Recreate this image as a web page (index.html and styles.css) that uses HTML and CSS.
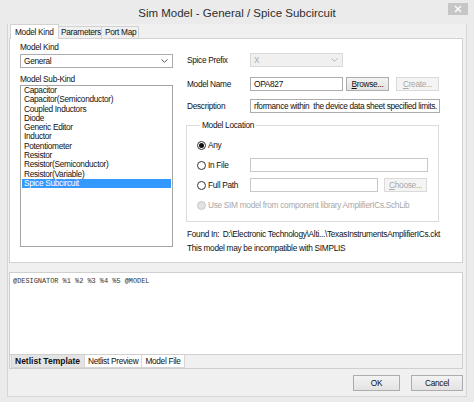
FILE: index.html
```html
<!DOCTYPE html>
<html>
<head>
<meta charset="utf-8">
<link rel="stylesheet" href="styles.css">
</head>
<body>
<div class="window">
  <div class="titlebar">
    <span class="title">Sim Model - General / Spice Subcircuit</span>
    <div class="close"><svg width="8" height="8" viewBox="0 0 8 8"><path d="M1 1L7 7M7 1L1 7" stroke="#fff" stroke-width="1.4"/></svg></div>
  </div>
  <div class="client">
    <div class="tabs">
      <div class="tab active w1">Model Kind</div>
      <div class="tab w2">Parameters</div>
      <div class="tab w3">Port Map</div>
    </div>
    <div class="panel">
      <div class="col-left">
        <div class="lbl">Model Kind</div>
        <div class="combo">
          <span>General</span>
          <svg class="chev" width="7" height="4" viewBox="0 0 7 4"><path d="M0.5 0.5L3.5 3.3L6.5 0.5" fill="none" stroke="#555" stroke-width="1"/></svg>
        </div>
        <div class="lbl lbl2">Model Sub-Kind</div>
        <div class="listbox">
          <div class="item">Capacitor</div>
          <div class="item">Capacitor(Semiconductor)</div>
          <div class="item">Coupled Inductors</div>
          <div class="item">Diode</div>
          <div class="item">Generic Editor</div>
          <div class="item">Inductor</div>
          <div class="item">Potentiometer</div>
          <div class="item">Resistor</div>
          <div class="item">Resistor(Semiconductor)</div>
          <div class="item">Resistor(Variable)</div>
          <div class="item sel">Spice Subcircuit</div>
        </div>
      </div>
      <div class="col-right">
        <div class="row r1">
          <span class="rlbl">Spice Prefix</span>
          <div class="combo disabled w93">
            <span>X</span>
            <svg class="chev" width="7" height="4" viewBox="0 0 7 4"><path d="M0.5 0.5L3.5 3.3L6.5 0.5" fill="none" stroke="#b5b5b5" stroke-width="1"/></svg>
          </div>
        </div>
        <div class="row r2">
          <span class="rlbl">Model Name</span>
          <div class="input w93">OPA827</div>
          <div class="btn browse"><u>B</u>rowse...</div>
          <div class="btn create dis"><u>C</u>reate...</div>
        </div>
        <div class="row r3">
          <span class="rlbl">Description</span>
          <div class="input desc">rformance within  the device data sheet specified limits.</div>
        </div>
        <fieldset class="group">
          <legend>Model Location</legend>
          <div class="grow">
            <span class="radio"><span class="dot on"></span>Any</span>
          </div>
          <div class="grow">
            <span class="radio"><span class="dot"></span>In File</span>
            <div class="input infile"></div>
          </div>
          <div class="grow">
            <span class="radio"><span class="dot"></span>Full Path</span>
            <div class="input fullpath"></div>
            <div class="btn choose dis"><u>C</u>hoose...</div>
          </div>
          <div class="grow">
            <span class="radio dis"><span class="dot dd"></span>Use SIM model from component library AmplifierICs.SchLib</span>
          </div>
        </fieldset>
        <div class="found"><span class="flbl">Found In:</span><span>D:\Electronic Technology\Alti...\TexasInstrumentsAmplifierICs.ckt</span></div>
        <div class="warn">This model may be incompatible with SIMPLIS</div>
      </div>
    </div>
    <div class="lower">
      <div class="netlist">@DESIGNATOR %1 %2 %3 %4 %5 @MODEL</div>
      <div class="btabs">
        <div class="btab active">Netlist Template</div>
        <div class="btab">Netlist Preview</div>
        <div class="btab">Model File</div>
      </div>
    </div>
    <div class="buttons">
      <div class="btn big ok">OK</div>
      <div class="btn big cancel">Cancel</div>
    </div>
  </div>
</div>
</body>
</html>
```
FILE: styles.css
```css
* { box-sizing: border-box; }
html, body { margin: 0; padding: 0; }
body {
  width: 474px;
  height: 402px;
  overflow: hidden;
  background: #ebebeb;
  font-family: "Liberation Sans", Arial, sans-serif;
  font-size: 8.3px;
  letter-spacing: -0.3px;
  color: #111;
}
.window {
  width: 474px;
  height: 402px;
  display: flex;
  flex-direction: column;
  padding: 0 7px 5px 7px;
}
.titlebar {
  height: 24px;
  display: grid;
  grid-template-columns: 1fr auto 1fr;
  align-items: center;
}
.title {
  grid-column: 2;
  font-size: 11.5px;
  letter-spacing: 0;
  color: #2e2e2e;
  padding-top: 1px;
}
.close {
  grid-column: 3;
  justify-self: end;
  align-self: start;
  margin-top: 3px;
  margin-right: -1px;
  width: 20px;
  height: 12px;
  background: #c6c6c6;
  display: flex;
  align-items: center;
  justify-content: center;
}
.client {
  flex: 1;
  background: #f0f0f0;
  border: 1px solid #d6d6d6;
  border-top: none;
  padding: 0 3px 0 1px;
  display: flex;
  flex-direction: column;
}
.tabs {
  height: 14px;
  display: flex;
  align-items: flex-end;
  padding-left: 1px;
}
.tab {
  height: 12px;
  line-height: 11px;
  border: 1px solid #d2d2d2;
  border-bottom: none;
  background: #f0f0f0;
  padding-left: 2px;
  margin-right: -1px;
  white-space: nowrap;
}
.tab.w1 { width: 49px; padding-left: 4px; }
.tab.w2 { width: 44px; }
.tab.w3 { width: 38px; padding-left: 3px; }
.tab.active {
  height: 15px;
  line-height: 14px;
  background: #fff;
  margin-bottom: -1px;
  position: relative;
  z-index: 1;
}
.panel {
  height: 225px;
  background: #fff;
  border: 1px solid #d2d2d2;
  display: flex;
  gap: 14px;
  padding: 3px 0 0 10px;
}
.col-left { width: 153px; display: flex; flex-direction: column; }
.lbl { height: 10px; line-height: 10px; }
.lbl2 { margin-top: 6px; }
.combo {
  margin-top: 2px;
  height: 14px;
  border: 1px solid #acacac;
  background: #fff;
  display: flex;
  align-items: center;
  justify-content: space-between;
  padding: 0 4px 0 3px;
}
.combo.disabled {
  margin-top: 0;
  background: #f0f0f0;
  border-color: #d9d9d9;
  color: #a8a8a8;
}
.listbox {
  margin-top: 1px;
  height: 162px;
  border: 1px solid #a5a5a5;
  padding: 0 1px;
}
.item { height: 9.3px; line-height: 9.3px; padding-left: 2px; white-space: nowrap; }
.item.sel { background: #3399ff; color: #fff; }
.col-right { width: 253px; display: flex; flex-direction: column; }
.row { display: flex; align-items: center; height: 14px; }
.r1 { margin-top: 11px; }
.r2 { margin-top: 10px; }
.r3 { margin-top: 8px; height: 14px; }
.rlbl { width: 63px; white-space: nowrap; }
.w93 { width: 93px; }
.input {
  height: 14px;
  border: 1px solid #acacac;
  background: #fff;
  padding-left: 3px;
  line-height: 12px;
  white-space: pre;
  overflow: hidden;
}
.desc { width: 190px; letter-spacing: -0.35px; }
.btn {
  height: 14px;
  border: 1px solid #adadad;
  background: linear-gradient(#f3f3f3, #e3e3e3);
  display: flex;
  align-items: center;
  justify-content: center;
  white-space: nowrap;
}
.btn.dis { border-color: #dadada; background: #f4f4f4; color: #a8a8a8; }
.browse { width: 43px; margin-left: 3px; }
.create { width: 43px; margin-left: 7px; }
.group {
  margin: 7px 0 0 -1px;
  width: 253px;
  height: 102px;
  border: 1px solid #dcdcdc;
  padding: 8px 0 0 10px;
  display: flex;
  flex-direction: column;
  gap: 6px;
}
.group legend {
  padding: 0 2px;
  margin-left: 3px;
  height: 10px;
  line-height: 10px;
}
.grow { display: flex; align-items: center; height: 14px; }
.radio { width: 53px; display: flex; align-items: center; white-space: nowrap; }
.radio.dis { color: #a8a8a8; width: auto; }
.dot {
  width: 9px;
  height: 9px;
  border-radius: 50%;
  border: 1px solid #333;
  background: #fff;
  margin-right: 2px;
  display: flex;
  align-items: center;
  justify-content: center;
}
.dot.on::after {
  content: "";
  width: 5px;
  height: 5px;
  border-radius: 50%;
  background: #111;
}
.dot.dd { background: #e2e2e2; border-color: #c9c9c9; }
.infile { width: 178px; border-color: #c8c8c8; }
.fullpath { width: 128px; border-color: #c8c8c8; }
.choose { width: 43px; margin-left: 6px; }
.found { margin-top: 7px; height: 10px; line-height: 10px; display: flex; white-space: nowrap; }
.flbl { width: 41px; }
.warn { margin-top: 4px; height: 10px; line-height: 10px; white-space: nowrap; }
.lower {
  margin-top: 9px;
  height: 97px;
  border: 1px solid #cfcfcf;
  display: flex;
  flex-direction: column;
}
.netlist {
  flex: 1;
  background: #fff;
  border-bottom: 1px solid #cfcfcf;
  font-family: "Liberation Mono", "Courier New", monospace;
  font-size: 6.9px;
  letter-spacing: 0;
  color: #333;
  padding: 4px 3px;
}
.btabs { height: 13px; display: flex; background: #f0f0f0; padding-left: 1px; }
.btab {
  height: 13px;
  line-height: 12px;
  border: 1px solid #d6d6d6;
  border-top: none;
  background: #fff;
  padding: 0 3px;
  margin-right: -1px;
  white-space: nowrap;
}
.btab.active {
  background: #e4e4e4;
  font-weight: bold;
  font-size: 8.5px;
  letter-spacing: 0;
  padding: 0 3px;
  width: 74px;
}
.buttons { margin-top: 6px; display: flex; justify-content: flex-end; gap: 11px; padding-right: 0; }
.btn.big { height: 16px; font-size: 8.3px; }
.ok { width: 47px; }
.cancel { width: 52px; }
```
